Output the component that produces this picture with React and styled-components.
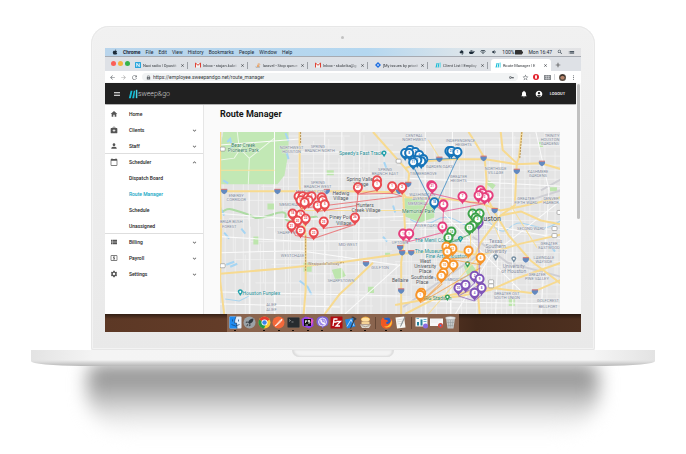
import React from "react";
import styled, { createGlobalStyle, css } from "styled-components";
import {
  MdHome, MdPerson, MdSettings, MdNotifications, MdAccountCircle, MdMenu,
  MdArrowBack, MdArrowForward, MdRefresh, MdLock, MdStarBorder, MdVpnKey, MdMoreVert,
  MdExpandMore, MdExpandLess, MdClose, MdAdd, MdSearch, MdWifi, MdVolumeDown,
  MdList, MdMedicalServices, MdCalendarToday, MdViewList, MdLocalAtm,
} from "react-icons/md";
import { FaApple, FaDocker, FaEvernote } from "react-icons/fa";

const Global = createGlobalStyle`
  * { box-sizing: border-box; }
  body { margin: 0; background: #fff; font-family: Roboto, sans-serif; color: #222; overflow-x: hidden; }
  button { border: 0; padding: 0; background: none; font: inherit; color: inherit; }
  a { color: inherit; text-decoration: none; }
  svg { flex: none; }
`;

const Page = styled.main`
  display: flex;
  flex-direction: column;
  align-items: center;
  padding-top: 26px;
  overflow: hidden;
`;
const Lid = styled.section`
  width: 73.5%;
  padding: 0 14px 18px;
  border-radius: 18px 18px 2px 2px;
  background: linear-gradient(#f1f1f1, #e9e9e9);
  box-shadow: inset 0 0 1px 1px #e6e6e6, inset 0 0 0 2px #f4f4f4;
`;
const CameraRow = styled.div`
  display: flex;
  height: 22px;
  align-items: center;
  justify-content: center;
  &::after { content: ""; width: 3px; height: 3px; border-radius: 50%; background: #c2c2c2; }
`;
const Screen = styled.div`
  display: flex;
  flex-direction: column;
  overflow: hidden;
  background: #fafafa;
`;
const MenuBar = styled.header`
  display: flex;
  align-items: center;
  gap: 5px;
  height: 9px;
  padding: 0 6px 0 7px;
  font-size: 5px;
  line-height: 8px;
  color: #1c2b38;
  border-bottom: 1px solid #a7abb2;
  background: linear-gradient(90deg, #b9d5ec, #b4d7f0 55%, #dde5ea 76%, #e3e3e5);
`;
const MenuItem = styled.button`font-weight: ${(p) => (p.$strong ? 700 : 400)};`;
const Status = styled.div`display: flex; align-items: center; gap: 5px; margin-left: auto;`;
const Charge = styled.span`display: flex; align-items: center; gap: 1px;`;

const TabStrip = styled.div`
  display: flex;
  align-items: end;
  height: 14px;
  padding: 2px 4px 0 6px;
  background: #dee1e6;
`;
const Lights = styled.div`display: flex; gap: 2px; width: 20px; padding-bottom: 5px;`;
const Light = styled.span`width: 5px; height: 5px; border-radius: 50%; background: ${(p) => p.$c};`;
const Tab = styled.button`
  display: flex;
  flex: 0 1 60px;
  min-width: 0;
  align-items: center;
  gap: 2px;
  height: 12px;
  padding: 0 3px 0 4px;
  font-size: 4px;
  color: #34383d;
  border-radius: 3px 3px 0 0;
  ${(p) => p.$active ? css`background: #fff;` : css`
    &::after { content: ""; width: 1px; height: 7px; background: #9b9fa5; }
  `}
`;
const TabLabel = styled.span`
  flex: 1;
  text-align: left;
  white-space: nowrap;
  mask-image: linear-gradient(90deg, #000 80%, #0005);
`;
const NewTab = styled.button`display: flex; padding: 0 3px; font-size: 8px; height: 12px; align-items: center; color: #333;`;

const AddressBar = styled.div`
  display: flex;
  align-items: center;
  gap: 3px;
  height: 12px;
  padding: 0 4px;
  font-size: 7px;
  color: #666b70;
  background: #fff;
`;
const IconButton = styled.button`display: flex; width: 8px; align-items: center; justify-content: center; color: ${(p) => p.$c || "inherit"};`;
const UrlPill = styled.label`
  display: flex;
  flex: 1;
  align-items: center;
  gap: 2px;
  height: 8px;
  padding: 0 4px;
  border-radius: 4px;
  background: #f1f3f4;
`;
const UrlInput = styled.input`
  flex: 1;
  min-width: 0;
  border: 0;
  padding: 0;
  background: none;
  font: 5px/8px Roboto, sans-serif;
  color: #34373b;
`;
const Divider = styled.span`width: 1px; height: 6px; background: #d5d7da;`;

const Viewport = styled.div`display: flex; background: #f5f5f5;`;
const WebApp = styled.div`flex: 1; min-width: 0;`;
const ScrollTrack = styled.div`
  width: 5px;
  padding: 1px;
  background: #fafafa;
  &::after { content: ""; display: block; height: 59%; border-radius: 2px; background: #c1c1c1; }
`;
const AppBar = styled.header`
  display: flex;
  align-items: center;
  gap: 7px;
  height: 21px;
  padding: 0 11px 0 8px;
  color: #fff;
  background: #212121;
  box-shadow: 0 1px 2px #0006;
`;
const Logout = styled.button`font-size: 4px; font-weight: 500;`;
const Brand = styled.a`display: flex; align-items: center; margin-right: auto; font: 300 7px/10px Roboto, sans-serif; color: #d4d4d4;`;
const Body = styled.div`display: flex; padding-top: 1px;`;
const Side = styled.nav`
  width: 99px;
  min-height: 209px;
  padding-top: 1px;
  background: #fff;
  border-right: 1px solid #e6e6e6;
`;
const NavRow = styled.a`
  display: flex;
  align-items: center;
  height: 16px;
  padding: 0 5px;
  font-size: 5px;
  font-weight: 500;
  line-height: 8px;
  color: ${(p) => (p.$active ? "#12a5c4" : "#1d1d1d")};
  box-shadow: ${(p) => (p.$rule ? "0 -1px #dedede" : "none")};
`;
const NavIcon = styled.span`display: flex; width: 19px; font-size: 8px; color: #555;`;
const NavLabel = styled.span`flex: 1;`;
const Chevron = styled.span`display: flex; font-size: 7px; color: #555;`;
const Content = styled.div`
  display: flex;
  flex: 1;
  min-width: 0;
  flex-direction: column;
  padding: 0 16px;
  background: #fafafa;
`;
const Title = styled.h1`margin: 3px 0 11px; font-size: 9px; line-height: 13px; font-weight: 700; color: #161616;`;
const MapFrame = styled.div`
  flex: 1;
  min-height: 0;
  overflow: hidden;
  svg { display: block; width: 100%; height: 100%; }
`;
const Desktop = styled.footer`
  display: flex;
  justify-content: center;
  height: 18px;
  background: linear-gradient(#0007, #0000 5px), linear-gradient(90deg, #5c3825, #653d29 30%, #5e3a27 65%, #43291b 78%, #4e3020);
`;
const Dock = styled.div`
  display: flex;
  align-items: center;
  justify-content: space-between;
  width: 232px;
  padding: 0 2px;
  background: #8a644e;
`;
const DockButton = styled.button`
  display: flex;
  flex-direction: column;
  align-items: center;
  height: 18px;
  padding-top: 2px;
  &::after { content: ""; width: 2px; height: 1px; margin-top: 1px; background: ${(p) => (p.$run ? "#1a0f08" : "transparent")}; }
`;
const DockRule = styled.span`width: 1px; height: 12px; margin: 0 2px; background: #664735;`;

const Base = styled.div`
  display: flex;
  justify-content: center;
  width: 91%;
  height: 16px;
  border-radius: 0 0 50px 50px / 0 0 5px 5px;
  background:
    linear-gradient(transparent 10px, #dcdcdc 12px, #b8b8b8),
    linear-gradient(90deg, #e3e3e3, #f4f4f4 10%, #f5f5f5 90%, #e3e3e3);
`;
const Notch = styled.div`
  width: 102px;
  height: 7px;
  border-radius: 0 0 7px 7px;
  background: #f3f3f3;
  box-shadow: inset 2px -1px 2px #dcdcdc, inset -2px 0 2px #dcdcdc;
`;
const Shadow = styled.div`
  width: 87%;
  height: 89px;
  overflow: hidden;
  &::before {
    content: "";
    display: block;
    height: 66px;
    margin: 0 42px;
    border-radius: 10px 10px 40px 40px;
    background: linear-gradient(#555, #9c9c9c 8px, #a5a5a5 22px, #cacaca 36px, #e8e8e8 50px, #fbfbfb);
    filter: blur(9px);
  }
`;

/* ---------- small drawings ---------- */
const Mark = ({ w = 6 }) => (
  <svg width={w} height={w} viewBox="0 0 12 12" aria-hidden="true">
    <path d="M1 11 3.2 2h2.2L3.4 11zM5 11 7 2h1.6L7.4 11z" fill="#16bcd6" /><path d="M9.4 1h1.8v10H9.4z" fill="#4ad4e4" />
  </svg>
);
const TabIcon = ({ kind }) => {
  if (kind === "mark") return <Mark />;
  return (
    <svg width="6" height="6" viewBox="0 0 12 12" aria-hidden="true">
      {kind === "navi" && <><rect width="12" height="12" rx="1" fill="#29a5dc" /><path d="M3.5 9.5v-7l5 7v-7" stroke="#fff" strokeWidth="1.7" fill="none" /></>}
      {kind === "mail" && <><path d="M0 2h12v9H0z" fill="#f4f4f4" /><path d="M1 11V2l5 4.5L11 2v9" stroke="#de4335" strokeWidth="2" fill="none" /></>}
      {kind === "stack" && <><path d="M2 8v3h7V8" stroke="#9b9b9b" fill="none" /><path d="M4 9h4M4 7l4 .5M5 4.5l4 2M7 2l3 3.5" stroke="#ee8123" strokeWidth="1.2" /></>}
      {kind === "jira" && <><path d="M6 0 12 6 6 12 0 6z" fill="#1f6fe0" /><path d="M6 4 8 6 6 8 4 6z" fill="#fff" /></>}
    </svg>
  );
};

const dockArt = {
  Finder: <><rect x="1" y="1" width="24" height="24" rx="2" fill="#e3eefa" /><path d="M1 1h13c-2 5-3 9-3 13h4l1 11H1z" fill="#1e8bf0" /><path d="M7 7v4M19 7v4M5 17q8 6 16 0M14 1q-3 7-3 13h4l1 11" stroke="#153f72" strokeWidth="1.4" fill="none" /></>,
  Launchpad: <><circle cx="13" cy="13" r="12" fill="#9ba2a6" /><path d="M21 5q-8 0-11 8l3 3q8-3 8-11zM10 13l-5 1 3-4zM13 16l-1 5 4-3zM9 16l-3 5 5-3z" fill="#343b40" /></>,
  Chrome: <><circle cx="13" cy="13" r="12" fill="#fcc934" /><path d="M13 13 2.600 7A12 12 0 0 1 23.400 7z" fill="#e33b2e" /><path d="M2.600 7A12 12 0 0 0 12 25l4-9z" fill="#229a49" /><circle cx="13" cy="13" r="6" fill="#fff" /><circle cx="13" cy="13" r="4.500" fill="#3b82ec" /></>,
  Postman: <><circle cx="13" cy="13" r="12" fill="#f4683a" /><path d="M6 20 17 8l3-2-1 4L9 19z" stroke="#fff" strokeWidth="1.500" fill="#ffb08f" /></>,
  Terminal: <><rect x="1" y="3" width="24" height="20" rx="2" fill="#272b2f" stroke="#4b4b4b" /><path d="m4 7 3 2-3 2M9 12h4" stroke="#ddd" fill="none" /></>,
  PhpStorm: <><path d="M1 6 9 1l15 4 1 15-9 5L3 20z" fill="#9444ec" /><path d="M13 2l12 6-4 12z" fill="#e254c5" /><rect x="6" y="6" width="14" height="14" fill="#111" /><path d="M9 14V9h2v2H9M18 9h-4v2h4v3h-4M9 18h5" stroke="#fff" strokeWidth="1.500" fill="none" /></>,
  Viber: <><path d="M5 2q8-3 16 0 5 3 4 10 0 8-8 9l-5 4v-4Q2 21 1 13 0 5 5 2z" fill="#7d63d8" /><circle cx="13" cy="12" r="8" fill="#9c86ea" stroke="#fff" strokeWidth="1.500" /><path d="M9 7q-1 7 8 10l1-3-3-1-1 1-3-4 1-1z" stroke="#fff" fill="#fff" /><path d="M14 8q3 0 3 4" stroke="#fff" fill="none" /></>,
  FileZilla: <><rect x="1" y="1" width="24" height="24" rx="1" fill="#b30d12" /><path d="M6 20 8 6h7M7 12h6M13 11h8l-9 9h8" stroke="#fff" strokeWidth="2.600" fill="none" /></>,
  Xcode: <><path d="M2 7 18 4l5 17-17 4z" fill="#2487e4" /><path d="m6 21 8-14 6 13" stroke="#bfe4ff" strokeWidth="1.800" fill="none" /><path d="M12 25 20 5l-6-3 4-1 7 4-1 3-2-1-8 18z" fill="#343c45" /></>,
  Sequel: <><path d="M4 5q9-8 18 0v4H4z" fill="#e7a338" /><ellipse cx="13" cy="7" rx="8" ry="4" fill="#ffe0a0" /><path d="M5 11h16v5H5z" fill="#f4d295" /><path d="M2 17h22l-4 7H6z" fill="#ddd9d0" /><path d="M5 19q8 5 16 0" stroke="#7f684b" fill="none" /></>,
  Firefox: <><circle cx="13" cy="14" r="11" fill="#f58220" /><circle cx="14" cy="11" r="8" fill="#235ec4" /><path d="M2 8Q4 6 5 3l4 4q6 0 8 4-4-1-5 3 3 4 8-1 3-4 1-9 6 6 3 13-4 8-12 8Q2 24 2 14z" fill="#ef5823" /><path d="M23 8q3 9-5 14-6 2-10-1 11 2 15-13z" fill="#ffc638" /></>,
  TextEdit: <><path d="m3 3 17-2 3 22-17 2z" fill="#f7f7f4" /><path d="m6 8 12-2M6 12l12-2M7 16l12-2" stroke="#bcbcbc" /><path d="m23 2-8 17-3 4 1-5 8-17z" fill="#8c9499" /></>,
  "Minimised report": <><path d="M1 3h24v18H1z" fill="#f5fafc" /><path d="M4 12h4v7H4zM11 7h4v12h-4z" fill="#25839b" /><path d="M3 5h5M17 7h6M17 11h6" stroke="#6ab3cb" strokeWidth="2" /><circle cx="21" cy="20" r="5" fill="#8a6be0" /></>,
  "Minimised page": <><path d="M0 5h26v15H0z" fill="#f7f7f7" /><path d="M2 8h20M2 12h14" stroke="#ddd" /><circle cx="21" cy="19" r="5" fill="#dc4634" /><circle cx="21" cy="19" r="2" fill="#448aee" /></>,
  Trash: <><path d="M4 4h18l-3 21H7z" fill="#c6c9c9" /><ellipse cx="13" cy="4" rx="10" ry="3" fill="#eceeee" stroke="#999" /><path d="m8 8 2 15M13 8v15M18 8l-2 15M6 13h14M7 19h12" stroke="#929999" /></>,
};
const idle = ["Launchpad", "FileZilla", "Minimised report", "Minimised page", "Trash"];

/* ---------- map data ---------- */
const RED = "#e94b50", BLUE = "#1775ba", PINK = "#e63e7d", GREEN = "#3ea34b", ORANGE = "#f7952a", PURPLE = "#8055b8";
const pins = [
  [RED, [[299,196,3],[303,196,5],[301,200,12],[308,197,8],[312,196,4],[309,200,7],[305,202,9],[322,197,6],[323,200,3],[318,205,2],[325,204,5],[293,213,18],[301,214,16],[306,218,22],[298,220,20],[292,225,21],[301,230,27],[314,232,23],[324,221,25],[358,187,27],[377,180,2],[377,184,1],[392,186,1],[402,187,2],[355,217,26]]],
  [BLUE, [[410,150,5],[405,153,9],[415,152,3],[409,153,8],[419,155,6],[423,159,4],[421,161,7],[417,160,2],[413,162,11],[449,151,4],[451,151,21],[457,152,1],[434,202,18]]],
  [PINK, [[431,185,3],[432,186,21],[443,204,4],[462,196,7],[480,190,5],[482,193,8],[488,195,6],[484,197,3],[478,195,15],[442,226,6],[403,233,1],[409,233,1]]],
  [PURPLE, [[478,222,3]]],
  [GREEN, [[472,213,7],[479,213,5],[475,217,8],[477,219,2],[472,225,4],[469,227,11],[451,231,14],[448,237,3]]],
  [ORANGE, [[446,246,8],[452,248,12],[447,251,6],[468,250,5],[480,257,4],[446,261,3],[444,264,10],[453,264,7],[443,272,2],[441,275,1],[421,292,4],[420,294,1]]],
  [PURPLE, [[458,287,20],[465,284,7],[474,275,2],[479,278,9],[481,287,8],[474,292,4]]],
];
const gray = "#7d8799", dark = "#4e5257", teal = "#1d8e96", park = "#348454";
const labels = [
  [244,147,"Bear Creek",park,5],[244,152,"Pioneers Park",park,5],[292,149,"NORTHWEST",gray,4],[292,153,"HOUSTON",gray,4],
  [318,148,"SPRING",gray,4],[320,152,"BRANCH NORTH",gray,4],[318,184,"SPRING",gray,4],[318,188,"BRANCH WEST",gray,4],[311,193,"MEMORIAL CITY",gray,4],
  [237,197,"ENERGY",gray,4],[237,201,"CORRIDOR",gray,4],[290,206,"MEMORIAL",gray,4],[232,223,"BRIAR BUSH",gray,4],[230,227,"FOREST",gray,4],[289,233,"SHARPVIEW",gray,4],
  [385,171,"SPRING",gray,4],[385,175,"BRANCH EAST",gray,4],[414,137,"CENTRAL",gray,4],[414,141,"NORTHWEST",gray,4],[460,142,"INDEPENDENCE",gray,4],[463,146,"HEIGHTS",gray,4],
  [361,155,"Speedy's Fast Track",teal,5],[361,181,"Spring Valley",dark,5],[361,186,"Village",dark,5],[341,195,"Hedwig",dark,5],[341,200,"Village",dark,5],
  [365,207,"Hunters",dark,5],[366,212,"Creek Village",dark,5],[342,219,"Piney Point",dark,5],[344,224,"Village",dark,5],
  [439,168,"GARDEN OAKS",gray,4],[423,175,"TIMBERGROVE",gray,4],[458,178,"GREATER",gray,4],[458,182,"HEIGHTS",gray,4],[422,196,"WASHINGTON",gray,4],[421,200,"AVENUE /",gray,4],[418,205,"MEMORIAL",gray,4],[418,213,"Memorial Park",park,5],
  [495,170,"NORTHSIDE",gray,4],[495,174,"VILLAGE",gray,4],[551,137,"TRINITY",gray,4],[549,141,"HOUSTON",gray,4],[549,145,"GARDENS",gray,4],[537,173,"KASHMERE",gray,4],[537,177,"GARDENS",gray,4],
  [525,200,"GREATER",gray,4],[525,204,"FIFTH WARD",gray,4],[550,200,"DENVER",gray,4],[550,204,"HARBOR",gray,4],[530,229,"SECOND WARD",gray,4],[487,221,"Houston","#393b40",7],
  [426,226,"RIVER OAKS",gray,4],[400,243,"UPTOWN",gray,4],[437,241,"The Menil Collection",teal,5],[432,252,"The Museum of",teal,5],[446,257,"Fine Arts, Houston",teal,5],
  [425,262,"West",dark,5],[425,267,"University",dark,5],[425,272,"Place",dark,5],[422,278,"Southside",dark,5],[422,283,"Place",dark,5],[400,281,"Bellaire",dark,5],[436,299,"NRG Stadium",park,5],
  [348,245,"MID-WEST",gray,4],[293,256,"WESTCHASE",gray,4],[324,264,"Westpark Tollway","#927350",4],[380,268,"GULFTON",gray,4],[341,281,"SHARPSTOWN",gray,4],[262,294,"Houston Funplex",teal,5],[272,305,"ALIEF",gray,4],[272,310,"ALIEF",gray,4],
  [495,242,"Texas",gray,5],[495,247,"Southern",gray,5],[495,252,"University",gray,5],[513,267,"University",gray,5],[513,272,"of Houston",gray,5],[548,244,"GREATER",gray,4],[548,248,"EASTWOOD",gray,4],[543,258,"LAWNDALE",gray,4],[543,262,"WAYSIDE",gray,4],[536,275,"GREATER",gray,4],[536,279,"PINE VALLEY",gray,4],[506,294,"GREATER OST",gray,4],[506,298,"SOUTH UNION",gray,4],[547,301,"GOLFCREST",gray,4],[547,307,"BELLFORT",gray,4],[449,280,"TEXAS MEDICAL",gray,4],
];
const majors = [
  "M220 191H345L402 192 406 197 450 199 480 203 500 210 520 206 560 197",
  "M300 132V185L302 205 306 235V290L304 313", "M221 132V191L222 225 221 280 225 313",
  "M373 132 405 168 409 173 408 183 403 193 405 232 401 262V313",
  "M405 168 425 161 450 159H485L515 164 540 163 560 169", "M468 132 475 143 484 158 486 180 485 195 494 212 508 235 530 260 560 283",
  "M500 132 502 150 516 163 514 205 500 215 480 242 475 254 450 249 402 253 345 261 280 268 220 273",
  "M521 132 518 158 516 163", "M373 262 350 284 340 293 325 313", "M560 234 520 243 500 249 478 255 476 275 479 313",
  "M405 313 432 299 460 295 490 289 515 278 560 262", "M395 304 450 294 490 287 530 292 560 279", "M500 215 520 211 540 220 560 224",
];
const routes = [
  [RED, "M301 208 402 196M358 194 392 193 402 196M358 194 355 224 314 238 296 235 292 228M323 228 355 224M318 211 357 205M377 190 358 194"],
  [BLUE, "M414 168 434 208 457 158M457 158 414 160"],
  [PINK, "M431 193 470 202 484 203M431 193 407 242M443 211 484 203M443 211 442 232 409 241M435 205 443 211M409 241 403 239"],
  [GREEN, "M448 243 469 234 475 222M451 238 448 243"],
  [ORANGE, "M447 258 480 264M420 302 480 267M420 302 453 270M442 283 420 302M468 257 447 258"],
  [PURPLE, "M478 229 479 285M458 295 479 284M474 300 481 294M465 291 474 282M458 295 474 300"],
];
const shields = [[225,191],[278,191],[327,191],[408,184],[439,159],[483,158],[541,163],[516,171],[494,210],[366,263],[400,247],[402,252],[411,252],[401,290],[525,259],[534,291],[399,191]];

// Local streets: evenly spaced with a small repeating drift so blocks differ in size.
const streets = [];
for (let i = 0; i < 46; i += 1) {
  const x = 224 + i * 8 + ((i * 7) % 5);
  streets.push(`M${x} ${132 + (i * 19) % 40}V${220 + (i * 31) % 93}M${x + 2} ${220 + (i * 17) % 45}V313`);
}
for (let i = 0; i < 25; i += 1) {
  const y = 136 + i * 8 + ((i * 5) % 4);
  streets.push(`M${220 + (i * 37) % 90} ${y}H${350 + (i * 43) % 80}M${380 + (i * 29) % 70} ${y + 2}H560`);
}
const arterials = "M220 145 300 139M275 132V313M342 132V313M360 132 358 313M325 132V313M250 190V313M220 213 300 219 404 216M300 152H400M220 236 303 241 402 239 500 241M405 223H480L560 238M425 132V313M452 132 450 313M220 252 300 250 402 265M220 291 402 295M300 173H390M408 178 560 186M535 132 548 190 540 313M400 300 560 303M500 160 495 313M512 132V313M220 303 340 306 M440 210 520 290M420 145H560M345 313 402 262M455 313 490 255 560 200";

const Pin = ({ x, y, n, color }) => (
  <g transform={`translate(${x} ${y})`}>
    <path d="M0 8C-1 5-5 4-5 0a5 5 0 1 1 10 0C5 4 1 5 0 8z" fill={color} />
    <circle r="3" fill="#fff" />
    <text y="1" fontSize="3" fontWeight="700" textAnchor="middle" fill={color}>{n}</text>
  </g>
);
const Spot = ({ x, y, c }) => (
  <g transform={`translate(${x} ${y})`}><path d="M0 4-2.500 0a2.500 2.500 0 1 1 5 0z" fill={c} /><circle r="1" fill="#fff" /></g>
);

function RouteMap() {
  return (
    <svg viewBox="220 132 340 181" preserveAspectRatio="xMidYMid slice" role="img" aria-label="Map of Houston with service routes">
      <rect x="220" y="132" width="340" height="181" fill="#e4e4e4" />
      <path d={streets.join("")} stroke="#f1f1f1" strokeWidth=".8" fill="none" />
      <path d="M224 132H289V152L285 175 278 184H220V155z" fill="#c2e8b5" />
      <path d="M238 132 240 148 250 158 249 184M250 158 275 138M220 160l15-2 8-12" stroke="#edf7e8" strokeWidth="1" fill="none" />
      <path d="M404 198 420 197 434 207V217L420 222 405 216z" fill="#bce5ad" />
      <path d="M268 203h7v6h-7zM254 236h5v8h-5zM332 269l10-2 4 8-10 5zM304 262h8v9h-8zM488 180l7 5-3 4-6-5zM463 265l8-2 5 7-9 5zM538 142h4v5h-4zM327 170h7v5h-7zM368 286h6v6h-6zM508 297h6v8h-6zM385 252h5v4h-5zM549 187h7v4h-7z" fill="#bde5ad" />
      <path d="M220 215q6-8 13-6t13 4 9 4 18-3 13 2 15 3 16-2" stroke="#aedba4" strokeWidth="2" fill="none" />
      <path d="M228 142l3-3 2 9M286 133l3 8M224 180l5 3M287 152l2 7M221 207l4 8M227 264l8-3M231 266l7-3M300 280l8 6 4 8M242 228l4 5M225 232l5 6M336 221l6 3M383 236l4 5M393 205l2 7M548 243l6 8M384 162l3 8" stroke="#a6d5f3" strokeWidth="2" fill="none" />
      <path d="M410 219q15 8 25 1t23 1 17-1 15 3 18 5 15-5 16 4 21-7M430 276l16 3 17-2 11-5M226 298l14 2 10-5" stroke="#a8d4ef" strokeWidth="1" fill="none" />
      <path d="M540 190 560 179M528 200 560 190M472 236l35 26 53 14M403 306l75-52" stroke="#cfcfd4" strokeWidth="2" fill="none" />
      <path d={arterials} stroke="#fbfbfb" strokeWidth="1" fill="none" />
      <path d="M428 140 440 159M470 205v55M484 203l18 42M220 170h55M305 210h96M428 313l48-55M510 205l26 42" stroke="#f7df9c" strokeWidth="1" fill="none" />
      {majors.map((d) => <path key={d} d={d} stroke="#f7da90" strokeWidth="2" fill="none" strokeLinejoin="round" />)}
      <path d="M521 132 519 158M306 235v35M301 132v12M316 264l28-2" stroke="#b89558" strokeWidth="1" strokeDasharray="2 1" fill="none" />
      {shields.map(([x, y]) => (
        <g key={`${x}-${y}`}><path d={`M${x - 3} ${y - 2}h6q1 3-3 5-4-2-3-5z`} fill="#6289c0" /><path d={`M${x - 3} ${y - 2}h6`} stroke="#d5716e" /></g>
      ))}
      {[[223,149],[223,265],[398,161],[553,228],[553,235],[490,281],[490,285],[558,212]].map(([x, y]) => <rect key={`${x}-${y}`} x={x - 2} y={y - 2} width="5" height="4" rx="1" fill="#fff" stroke="#8a8a8a" strokeWidth=".6" />)}
      {labels.map(([x, y, text, fill, size]) => (
        <text key={`${x}-${y}`} x={x} y={y} fontSize={size} fill={fill} textAnchor="middle" stroke="#f2f2f2" strokeWidth=".6" paintOrder="stroke">{text}</text>
      ))}
      <Spot x={384} y={153} c="#20a0aa" /><Spot x={241} y={291} c="#20a0aa" /><Spot x={460} y={238} c="#20a0aa" />
      <Spot x={467} y={263} c="#34a05b" /><Spot x={447} y={296} c="#34a05b" /><Spot x={495} y={256} c="#7790a4" /><Spot x={513} y={258} c="#7790a4" />
      {routes.map(([c, d]) => <path key={d} d={d} stroke={c} strokeWidth="1" opacity=".65" fill="none" />)}
      {pins.map(([color, list]) => list.map(([x, y, n]) => <Pin key={`${x}-${y}`} x={x} y={y} n={n} color={color} />))}
    </svg>
  );
}

const menus = ["File", "Edit", "View", "History", "Bookmarks", "People", "Window", "Help"];
const tabs = [
  ["navi", "Naxi radio | Opustit"], ["mail", "Inbox - stojan.kukri"], ["stack", "laravel - Stop queue"],
  ["mail", "Inbox - skukrika@g"], ["jira", "[My issues by priorit"], ["mark", "Client List | Employ"], ["mark", "Route Manager | E"],
];
const nav = [
  { label: "Home", icon: <MdHome /> }, { label: "Clients", icon: <MdMedicalServices />, fold: "more" },
  { label: "Staff", icon: <MdPerson />, fold: "more" }, { label: "Scheduler", icon: <MdCalendarToday />, fold: "less", rule: true },
  { label: "Dispatch Board" }, { label: "Route Manager", active: true }, { label: "Schedule" }, { label: "Unassigned" },
  { label: "Billing", icon: <MdViewList />, fold: "more", rule: true }, { label: "Payroll", icon: <MdLocalAtm />, fold: "more" },
  { label: "Settings", icon: <MdSettings />, fold: "more" },
];

export default function App() {
  return (
    <>
      <Global />
      <Page>
        <Lid>
          <CameraRow />
          <Screen>
            <MenuBar>
              <FaApple size={6} />
              <MenuItem $strong>Chrome</MenuItem>
              {menus.map((m) => <MenuItem key={m}>{m}</MenuItem>)}
              <Status>
                <FaEvernote size={5} /><FaDocker size={6} /><MdWifi size={6} /><MdVolumeDown size={6} />
                <Charge>100%
                  <svg width="8" height="5" viewBox="0 0 16 10" aria-hidden="true"><rect width="14" height="9" rx="1" fill="#333" /><path d="M15 3v4" stroke="#333" strokeWidth="2" /></svg>
                </Charge>
                <span>Mon 16:47</span><MdSearch size={6} /><MdList size={7} />
              </Status>
            </MenuBar>
            <TabStrip>
              <Lights><Light $c="#fb5f57" /><Light $c="#f3b43c" /><Light $c="#35b34a" /></Lights>
              {tabs.map(([kind, label], i) => (
                <Tab key={label} $active={i === 6}>
                  <TabIcon kind={kind} /><TabLabel>{label}</TabLabel><MdClose size={5} />
                </Tab>
              ))}
              <NewTab aria-label="New tab"><MdAdd /></NewTab>
            </TabStrip>
            <AddressBar>
              <IconButton aria-label="Back"><MdArrowBack /></IconButton>
              <IconButton aria-label="Forward" $c="#aaa"><MdArrowForward /></IconButton>
              <IconButton aria-label="Reload"><MdRefresh /></IconButton>
              <UrlPill>
                <MdLock size={5} />
                <UrlInput aria-label="Address" defaultValue="https://employee.sweepandgo.net/route_manager" />
                <MdVpnKey size={5} />
              </UrlPill>
              <IconButton aria-label="Bookmark"><MdStarBorder /></IconButton>
              <IconButton aria-label="Opera extension">
                <svg width="6" height="6" viewBox="0 0 12 12"><circle cx="6" cy="6" r="6" fill="#e2212c" /><ellipse cx="6" cy="6" rx="2" ry="4" fill="#fff" /></svg>
              </IconButton>
              <IconButton aria-label="Screen capture">
                <svg width="7" height="5" viewBox="0 0 14 10"><path d="M0 0h14v10H0z" fill="#85898d" /><path d="M2 3h10M2 7h10M5 1v8M9 1v8" stroke="#d5d7da" /></svg>
              </IconButton>
              <Divider />
              <IconButton aria-label="Profile">
                <svg width="7" height="7" viewBox="0 0 14 14"><circle cx="7" cy="7" r="7" fill="#5d5046" /><circle cx="7" cy="7" r="4" fill="#b68369" /><path d="M3 6q4-6 8 0V3L7 1 3 3z" fill="#2b2725" /></svg>
              </IconButton>
              <IconButton aria-label="More"><MdMoreVert /></IconButton>
            </AddressBar>
            <Viewport>
              <WebApp>
                <AppBar>
                  <IconButton aria-label="Menu"><MdMenu size={8} /></IconButton>
                  <Brand href="#home"><Mark w={10} />sweep&go</Brand>
                  <IconButton aria-label="Notifications"><MdNotifications size={8} /></IconButton>
                  <IconButton aria-label="Account"><MdAccountCircle size={8} /></IconButton>
                  <Logout>LOGOUT</Logout>
                </AppBar>
                <Body>
                  <Side>
                    {nav.map((n) => (
                      <NavRow key={n.label} href="#nav" $active={n.active} $rule={n.rule}>
                        <NavIcon>{n.icon}</NavIcon><NavLabel>{n.label}</NavLabel>
                        {n.fold && <Chevron>{n.fold === "more" ? <MdExpandMore /> : <MdExpandLess />}</Chevron>}
                      </NavRow>
                    ))}
                  </Side>
                  <Content>
                    <Title>Route Manager</Title>
                    <MapFrame><RouteMap /></MapFrame>
                  </Content>
                </Body>
              </WebApp>
              <ScrollTrack />
            </Viewport>
            <Desktop>
              <Dock>
                {Object.entries(dockArt).map(([name, art]) => (
                  <React.Fragment key={name}>
                    {(name === "Firefox" || name === "Minimised report") && <DockRule />}
                    <DockButton aria-label={name} $run={!idle.includes(name)}>
                      <svg width="13" height="13" viewBox="0 0 26 26">{art}</svg>
                    </DockButton>
                  </React.Fragment>
                ))}
              </Dock>
            </Desktop>
          </Screen>
        </Lid>
        <Base><Notch /></Base>
        <Shadow />
      </Page>
    </>
  );
}
